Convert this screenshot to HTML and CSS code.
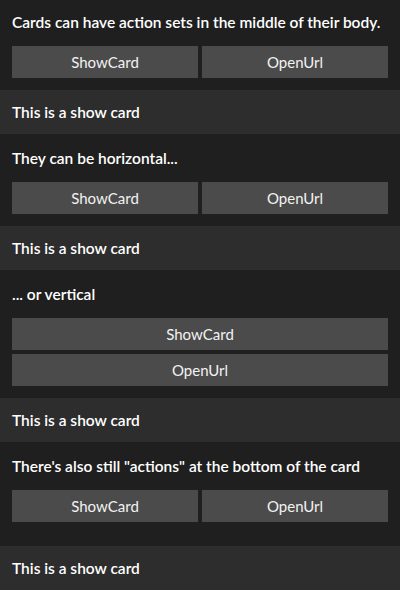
FILE: index.html
```html
<!DOCTYPE html>
<html>
<head>
<meta charset="utf-8">
<link rel="stylesheet" href="styles.css">
</head>
<body>
<div class="card">
  <div class="section first">
    <div class="text">Cards can have action sets in the middle of their body.</div>
    <div class="actions row">
      <div class="btn">ShowCard</div>
      <div class="btn">OpenUrl</div>
    </div>
  </div>
  <div class="showcard"><div class="text">This is a show card</div></div>

  <div class="section">
    <div class="text">They can be horizontal...</div>
    <div class="actions row">
      <div class="btn">ShowCard</div>
      <div class="btn">OpenUrl</div>
    </div>
  </div>
  <div class="showcard"><div class="text">This is a show card</div></div>

  <div class="section">
    <div class="text">... or vertical</div>
    <div class="actions col">
      <div class="btn">ShowCard</div>
      <div class="btn">OpenUrl</div>
    </div>
  </div>
  <div class="showcard"><div class="text">This is a show card</div></div>

  <div class="section last">
    <div class="text">There's also still "actions" at the bottom of the card</div>
    <div class="actions row">
      <div class="btn">ShowCard</div>
      <div class="btn">OpenUrl</div>
    </div>
  </div>
  <div class="showcard"><div class="text">This is a show card</div></div>
</div>
</body>
</html>
```
FILE: styles.css
```css
html, body {
  margin: 0;
  padding: 0;
  background: #1f1f1f;
}
body {
  font-family: "Lato", "Noto Sans", sans-serif;
  color: #ffffff;
}
.card {
  display: flex;
  flex-direction: column;
}
.section {
  padding: 14px 12px 12px;
  background: #1f1f1f;
}
.section.first {
  padding-top: 12px;
}
.section.last {
  padding-bottom: 24px;
}
.text {
  font-size: 15.5px;
  line-height: 20px;
  font-weight: 600;
  white-space: nowrap;
}
.actions {
  margin-top: 14px;
  display: flex;
  gap: 4px;
}
.actions.row {
  flex-direction: row;
}
.actions.col {
  flex-direction: column;
}
.btn {
  height: 32px;
  background: #4b4b4b;
  color: #f2f2f2;
  font-size: 15px;
  display: flex;
  align-items: center;
  justify-content: center;
}
.row .btn {
  flex: 1 1 0;
}
.col .btn {
  flex: none;
}
.showcard {
  background: #2d2d2d;
  padding: 12px;
}
```
